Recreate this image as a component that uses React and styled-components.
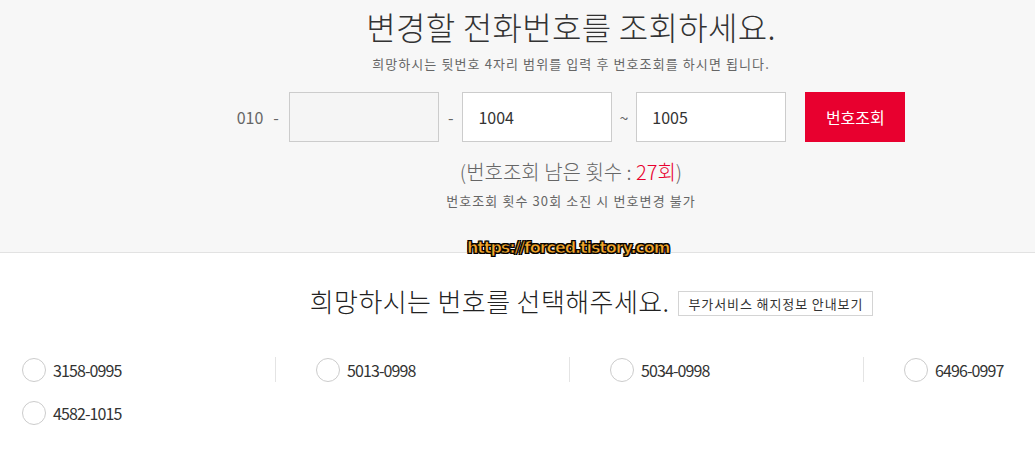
import React from 'react'
import styled, { createGlobalStyle } from 'styled-components'

const GlobalStyle = createGlobalStyle`
  html, body {
    margin: 0;
    padding: 0;
    background: #fff;
    overflow: hidden;
  }
  body {
    font-family: "Noto Sans CJK KR", "Noto Sans", sans-serif;
    color: #333;
  }
`

const Page = styled.div`
  position: relative;
  width: 1183px;
`

const SearchSection = styled.section`
  height: 253px;
  box-sizing: border-box;
  background: #f7f7f7;
  border-bottom: 1px solid #e2e2e2;
`

const SearchInner = styled.div`
  width: 1142px;
  padding-top: 4px;
  text-align: center;
`

const Title = styled.h2`
  margin: 0;
  font-size: 32px;
  font-weight: 300;
  line-height: 44px;
  letter-spacing: 0.3px;
  color: #333;
`

const Desc = styled.p`
  margin: ${p => p.top || 0}px 0 0;
  font-size: 13px;
  line-height: 20px;
  letter-spacing: ${p => p.spacing || 1}px;
  color: #666;
`

const InputRow = styled.div`
  display: flex;
  align-items: center;
  justify-content: center;
  margin-top: 18px;
  height: 50px;
  color: #666;
  font-size: 16px;
`

const Sep = styled.span`
  margin: 0 ${p => p.left}px 0 ${p => p.right}px;
`

const NumInput = styled.input`
  box-sizing: border-box;
  width: 150px;
  height: 50px;
  padding: 0 15px;
  border: 1px solid #ccc;
  background: ${p => (p.disabled ? '#f5f5f5' : '#fff')};
  font-family: inherit;
  font-size: 16px;
  color: #333;
  outline: none;
`

const SearchButton = styled.button`
  width: 100px;
  height: 50px;
  margin-left: 19px;
  border: 0;
  background: #e8002f;
  color: #fff;
  font-family: inherit;
  font-size: 16px;
  cursor: pointer;
`

const Remain = styled.p`
  margin: 16px 0 0;
  font-size: 20px;
  line-height: 28px;
  color: #666;
  font-weight: 300;
`

const Red = styled.span`
  color: #e8002f;
`

const Watermark = styled.div`
  position: absolute;
  left: 467px;
  top: 238px;
  font-family: "DejaVu Sans", sans-serif;
  font-weight: 900;
  font-size: 16px;
  letter-spacing: -1.1px;
  color: #f6a72a;
  -webkit-text-stroke: 0.6px #000;
  text-shadow: 1px 1px 0 #000, -1px -1px 0 #000, 1px -1px 0 #000, -1px 1px 0 #000;
`

const PickSection = styled.section`
  padding-top: 31px;
`

const PickHead = styled.div`
  display: flex;
  align-items: center;
  justify-content: center;
  gap: 9px;
`

const PickTitle = styled.h3`
  margin: 0;
  font-size: 26px;
  font-weight: 300;
  line-height: 34px;
  letter-spacing: 0.4px;
  color: #222;
`

const InfoButton = styled.button`
  height: 25px;
  padding: 0 9px;
  border: 1px solid #d4d4d4;
  background: #fff;
  font-family: inherit;
  font-size: 13px;
  letter-spacing: 0.9px;
  color: #333;
  margin-top: 4px;
`

const NumberList = styled.ul`
  list-style: none;
  margin: 39px 0 0;
  padding: 0;
  display: grid;
  grid-template-columns: repeat(4, 294px);
  grid-auto-rows: 43px;
`

const NumberItem = styled.li`
  position: relative;
  display: flex;
  align-items: center;
  height: 25px;
  padding-left: 22px;
  font-size: 16px;
  color: #333;
  letter-spacing: -0.9px;

  &::after {
    content: '';
    display: ${p => (p.divider ? 'block' : 'none')};
    position: absolute;
    left: 275px;
    top: 0;
    width: 1px;
    height: 25px;
    background: #e4e4e4;
  }
`

const Radio = styled.span`
  box-sizing: border-box;
  width: 24px;
  height: 24px;
  margin-right: 7px;
  border: 1px solid #ccc;
  border-radius: 50%;
  background: #fff;
`

const numbers = ['3158-0995', '5013-0998', '5034-0998', '6496-0997', '4582-1015']

export default function App() {
  return (
    <Page>
      <GlobalStyle />
      <SearchSection>
        <SearchInner>
          <Title>변경할 전화번호를 조회하세요.</Title>
          <Desc top={6} spacing={1.1}>희망하시는 뒷번호 4자리 범위를 입력 후 번호조회를 하시면 됩니다.</Desc>
          <InputRow>
            <span>010</span>
            <Sep right={10} left={10}>-</Sep>
            <NumInput disabled />
            <Sep right={9} left={9}>-</Sep>
            <NumInput defaultValue="1004" />
            <Sep right={7} left={8}>~</Sep>
            <NumInput defaultValue="1005" />
            <SearchButton>번호조회</SearchButton>
          </InputRow>
          <Remain>
            (번호조회 남은 횟수 : <Red>27회</Red>)
          </Remain>
          <Desc top={5} spacing={1.1}>번호조회 횟수 30회 소진 시 번호변경 불가</Desc>
        </SearchInner>
      </SearchSection>
      <Watermark>https://forced.tistory.com</Watermark>
      <PickSection>
        <PickHead>
          <PickTitle>희망하시는 번호를 선택해주세요.</PickTitle>
          <InfoButton>부가서비스 해지정보 안내보기</InfoButton>
        </PickHead>
        <NumberList>
          {numbers.map((n, i) => (
            <NumberItem key={n} divider={i < 3}>
              <Radio />
              {n}
            </NumberItem>
          ))}
        </NumberList>
      </PickSection>
    </Page>
  )
}
